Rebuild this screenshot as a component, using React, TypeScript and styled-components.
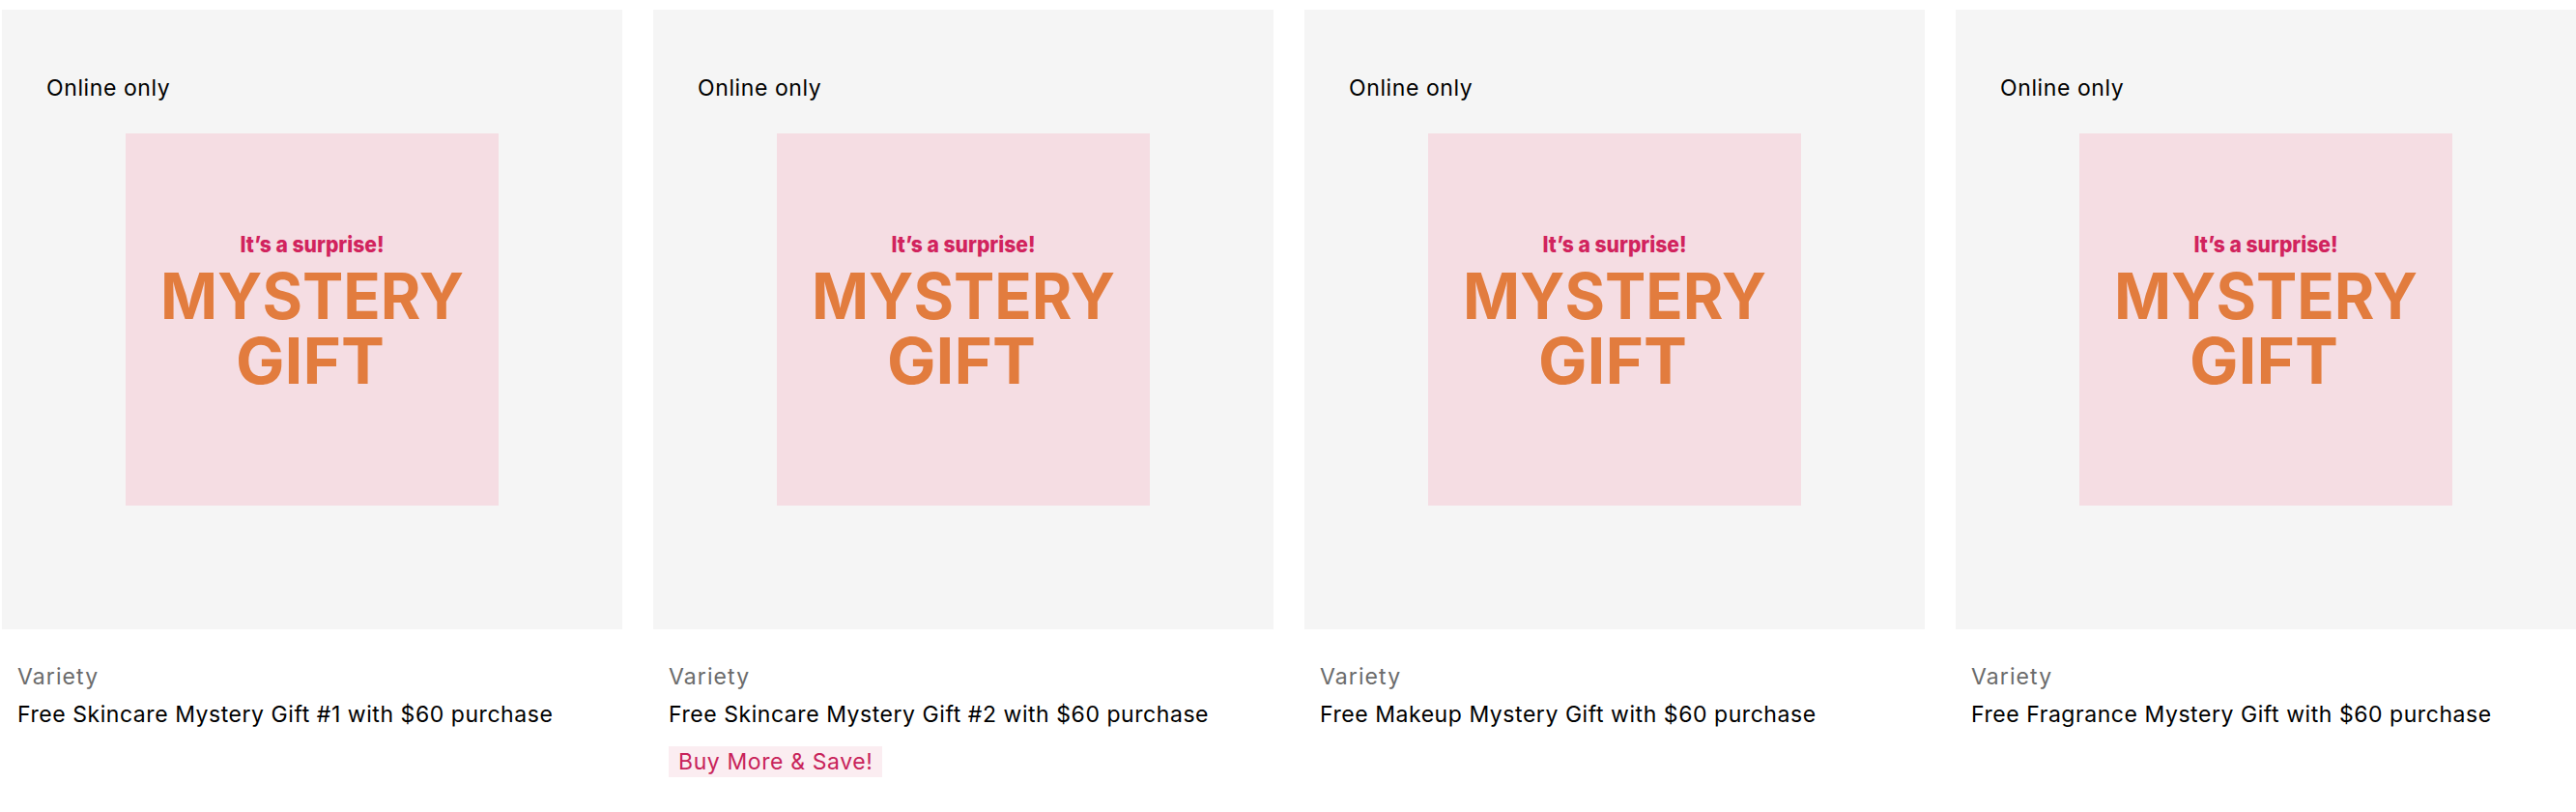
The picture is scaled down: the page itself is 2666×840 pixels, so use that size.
import React from "react";
import styled, { createGlobalStyle } from "styled-components";

const Global = createGlobalStyle`
  html, body {
    margin: 0;
    padding: 0;
    background: #ffffff;
  }
  body {
    font-family: "Inter", "Lato", sans-serif;
    color: #000;
  }
`;

const Grid = styled.div`
  display: grid;
  grid-template-columns: repeat(4, 642px);
  column-gap: 32px;
  padding: 10px 0 0 2px;
`;

const Card = styled.article`
  display: flex;
  flex-direction: column;
`;

const ImageArea = styled.div`
  position: relative;
  height: 641px;
  background: #f5f5f5;
  display: flex;
  align-items: center;
  justify-content: center;
`;

const OnlineTag = styled.span`
  position: absolute;
  left: 46px;
  top: 70px;
  font-size: 23px;
  line-height: 1;
  letter-spacing: 0.6px;
  color: #000;
`;

const GiftArt = styled.svg`
  display: block;
  width: 386px;
  height: 385px;
`;

const Info = styled.div`
  display: flex;
  flex-direction: column;
  align-items: flex-start;
  padding: 30px 16px 0;
`;

const Brand = styled.div`
  font-size: 23px;
  line-height: 38px;
  letter-spacing: 1.1px;
  color: #6b6b6b;
`;

const Title = styled.div`
  font-size: 23px;
  line-height: 40px;
  letter-spacing: 0.55px;
  color: #000;
`;

const Promo = styled.span`
  margin-top: 13px;
  display: inline-block;
  font-size: 23px;
  line-height: 32px;
  letter-spacing: 0.6px;
  padding: 0 10px;
  color: #c8235a;
  background: #fbedf1;
`;

function MysteryArt() {
  return (
    <GiftArt viewBox="0 0 386 385" aria-label="Mystery gift">
      <rect width="386" height="385" fill="#f5dde3" />
      <text
        x="193"
        y="123"
        textAnchor="middle"
        fontFamily="Inter, Lato, sans-serif"
        fontWeight={800}
        fontSize="23"
        fill="#d1235d"
        textLength="149"
        lengthAdjust="spacingAndGlyphs"
      >
        It’s a surprise!
      </text>
      <text
        x="193"
        y="192"
        textAnchor="middle"
        fontFamily="Inter, Lato, sans-serif"
        fontWeight={700}
        fontSize="66"
        fill="#e27c3e"
        textLength="314"
        lengthAdjust="spacingAndGlyphs"
      >
        MYSTERY
      </text>
      <text
        x="191"
        y="259"
        textAnchor="middle"
        fontFamily="Inter, Lato, sans-serif"
        fontWeight={700}
        fontSize="66"
        fill="#e27c3e"
        textLength="154"
        lengthAdjust="spacingAndGlyphs"
      >
        GIFT
      </text>
    </GiftArt>
  );
}

type Product = { title: string; promo?: string };

const products: Product[] = [
  { title: "Free Skincare Mystery Gift #1 with $60 purchase" },
  { title: "Free Skincare Mystery Gift #2 with $60 purchase", promo: "Buy More & Save!" },
  { title: "Free Makeup Mystery Gift with $60 purchase" },
  { title: "Free Fragrance Mystery Gift with $60 purchase" },
];

export default function App() {
  return (
    <>
      <Global />
      <Grid>
        {products.map((p) => (
          <Card key={p.title}>
            <ImageArea>
              <OnlineTag>Online only</OnlineTag>
              <MysteryArt />
            </ImageArea>
            <Info>
              <Brand>Variety</Brand>
              <Title>{p.title}</Title>
              {p.promo && <Promo>{p.promo}</Promo>}
            </Info>
          </Card>
        ))}
      </Grid>
    </>
  );
}
